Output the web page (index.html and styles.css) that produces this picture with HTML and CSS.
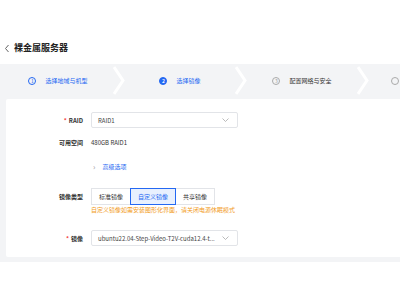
FILE: index.html
```html
<!DOCTYPE html>
<html lang="zh-CN">
<head>
    <meta charset="UTF-8">
    <meta name="viewport" content="width=device-width, initial-scale=1.0">
    <title>裸金属服务器</title>
    <link rel="stylesheet" href="styles.css">
</head>
<body>
    <div class="page-head">
        <svg class="back" width="6" height="9" viewBox="0 0 6 9"><polyline points="4.5,1 1.5,4.5 4.5,8" fill="none" stroke="#666" stroke-width="1"/></svg>
        <h1>裸金属服务器</h1>
    </div>

    <div class="steps">
        <div class="step done">
            <span class="step-num">1</span>
            <span class="step-text">选择地域与机型</span>
        </div>
        <svg class="step-arrow" width="12" height="33" viewBox="0 0 12 33"><polyline points="1,3 10,16.5 1,30" fill="none" stroke="#fff" stroke-width="3"/></svg>
        <div class="step active">
            <span class="step-num">2</span>
            <span class="step-text">选择镜像</span>
        </div>
        <svg class="step-arrow" width="12" height="33" viewBox="0 0 12 33"><polyline points="1,3 10,16.5 1,30" fill="none" stroke="#fff" stroke-width="3"/></svg>
        <div class="step">
            <span class="step-num">3</span>
            <span class="step-text">配置网络与安全</span>
        </div>
        <svg class="step-arrow" width="12" height="33" viewBox="0 0 12 33"><polyline points="1,3 10,16.5 1,30" fill="none" stroke="#fff" stroke-width="3"/></svg>
        <div class="step last">
            <span class="step-num"></span>
        </div>
    </div>

    <div class="content">
        <div class="card">
            <div class="form-row">
                <label class="form-label required">RAID</label>
                <div class="select">
                    <span>RAID1</span>
                    <svg width="7" height="4" viewBox="0 0 7 4"><polyline points="0.5,0.5 3.5,3.5 6.5,0.5" fill="none" stroke="#aaa" stroke-width="0.8"/></svg>
                </div>
            </div>
            <div class="form-row row-space">
                <label class="form-label">可用空间</label>
                <span class="value">480GB RAID1</span>
            </div>
            <div class="form-row row-advanced">
                <span class="form-label"></span>
                <a class="advanced"><span class="caret">›</span>高级选项</a>
            </div>
            <div class="form-row row-type">
                <label class="form-label">镜像类型</label>
                <div class="btn-group">
                    <span class="btn">标准镜像</span>
                    <span class="btn selected">自定义镜像</span>
                    <span class="btn">共享镜像</span>
                </div>
            </div>
            <div class="hint">自定义镜像如需安装图形化界面，请关闭电源休眠模式</div>
            <div class="form-row row-image">
                <label class="form-label required">镜像</label>
                <div class="select">
                    <span>ubuntu22.04-Step-Video-T2V-cuda12.4-t...</span>
                    <svg width="7" height="4" viewBox="0 0 7 4"><polyline points="0.5,0.5 3.5,3.5 6.5,0.5" fill="none" stroke="#aaa" stroke-width="0.8"/></svg>
                </div>
            </div>
        </div>
    </div>
</body>
</html>
```

FILE: styles.css
```css
body {
    margin: 0;
    font-family: "Noto Sans CJK SC", "Noto Sans", sans-serif;
    background-color: #fff;
    color: #333;
    overflow: hidden;
}
.page-head {
    height: 64px;
    box-sizing: border-box;
    padding: 32px 0 0 4px;
    display: flex;
    align-items: center;
    gap: 4px;
}
.page-head h1 {
    margin: 0;
    font-size: 9px;
    line-height: 12px;
    font-weight: 600;
    color: #222;
}
.steps {
    height: 33px;
    background-color: #f3f4f6;
    display: flex;
    align-items: center;
    padding-left: 3px;
    white-space: nowrap;
}
.step {
    width: 110px;
    flex-shrink: 0;
    display: flex;
    justify-content: center;
    align-items: center;
    gap: 9px;
    font-size: 6px;
    color: #333;
}
.step.last {
    justify-content: flex-start;
    padding-left: 22px;
}
.step-arrow {
    flex-shrink: 0;
}
.step-num {
    width: 8px;
    height: 8px;
    box-sizing: border-box;
    border: 0.8px solid #aaa;
    border-radius: 50%;
    font-size: 5px;
    line-height: 6.5px;
    text-align: center;
    color: #999;
}
.step.done .step-num {
    border-color: #2468f2;
    color: #2468f2;
}
.step.done .step-text {
    color: #2468f2;
}
.step.active .step-num {
    background-color: #2468f2;
    border-color: #2468f2;
    color: #fff;
    font-weight: 700;
}
.step.active .step-text {
    color: #2468f2;
}
.content {
    background-color: #f3f4f6;
    padding: 2px 0 5px 6px;
}
.card {
    background-color: #fff;
    height: 158px;
    box-sizing: border-box;
    padding-top: 13px;
    border-radius: 2px 0 0 2px;
}
.form-row {
    display: flex;
    align-items: center;
    height: 16px;
    font-size: 6px;
}
.form-label {
    width: 77px;
    flex-shrink: 0;
    text-align: right;
    padding-right: 8px;
    font-weight: 600;
    color: #333;
}
.form-label.required::before {
    content: "*";
    color: #f33e3e;
    margin-right: 2px;
}
.select {
    width: 147px;
    height: 16px;
    box-sizing: border-box;
    border: 0.8px solid #e2e4e8;
    border-radius: 2px;
    display: flex;
    align-items: center;
    justify-content: space-between;
    padding: 0 8px 0 6px;
    color: #444;
}
.value {
    color: #333;
}
.row-space {
    margin-top: 6px;
}
.row-advanced {
    margin-top: 8px;
}
.advanced {
    color: #2468f2;
    display: flex;
    align-items: center;
}
.caret {
    color: #999;
    font-size: 8px;
    margin: 0 7px 0 2px;
}
.row-type {
    margin-top: 14px;
    height: 17px;
}
.btn-group {
    display: flex;
    height: 17px;
}
.btn {
    height: 17px;
    box-sizing: border-box;
    border: 0.8px solid #e2e4e8;
    display: flex;
    align-items: center;
    padding: 0 7px;
    color: #333;
}
.btn + .btn {
    margin-left: -1px;
}
.btn.selected {
    border-color: #2468f2;
    background-color: #e8f0fe;
    color: #2468f2;
    position: relative;
}
.hint {
    margin-left: 85px;
    font-size: 6px;
    line-height: 9px;
    color: #f29b1c;
}
.row-image {
    margin-top: 16px;
}
```
